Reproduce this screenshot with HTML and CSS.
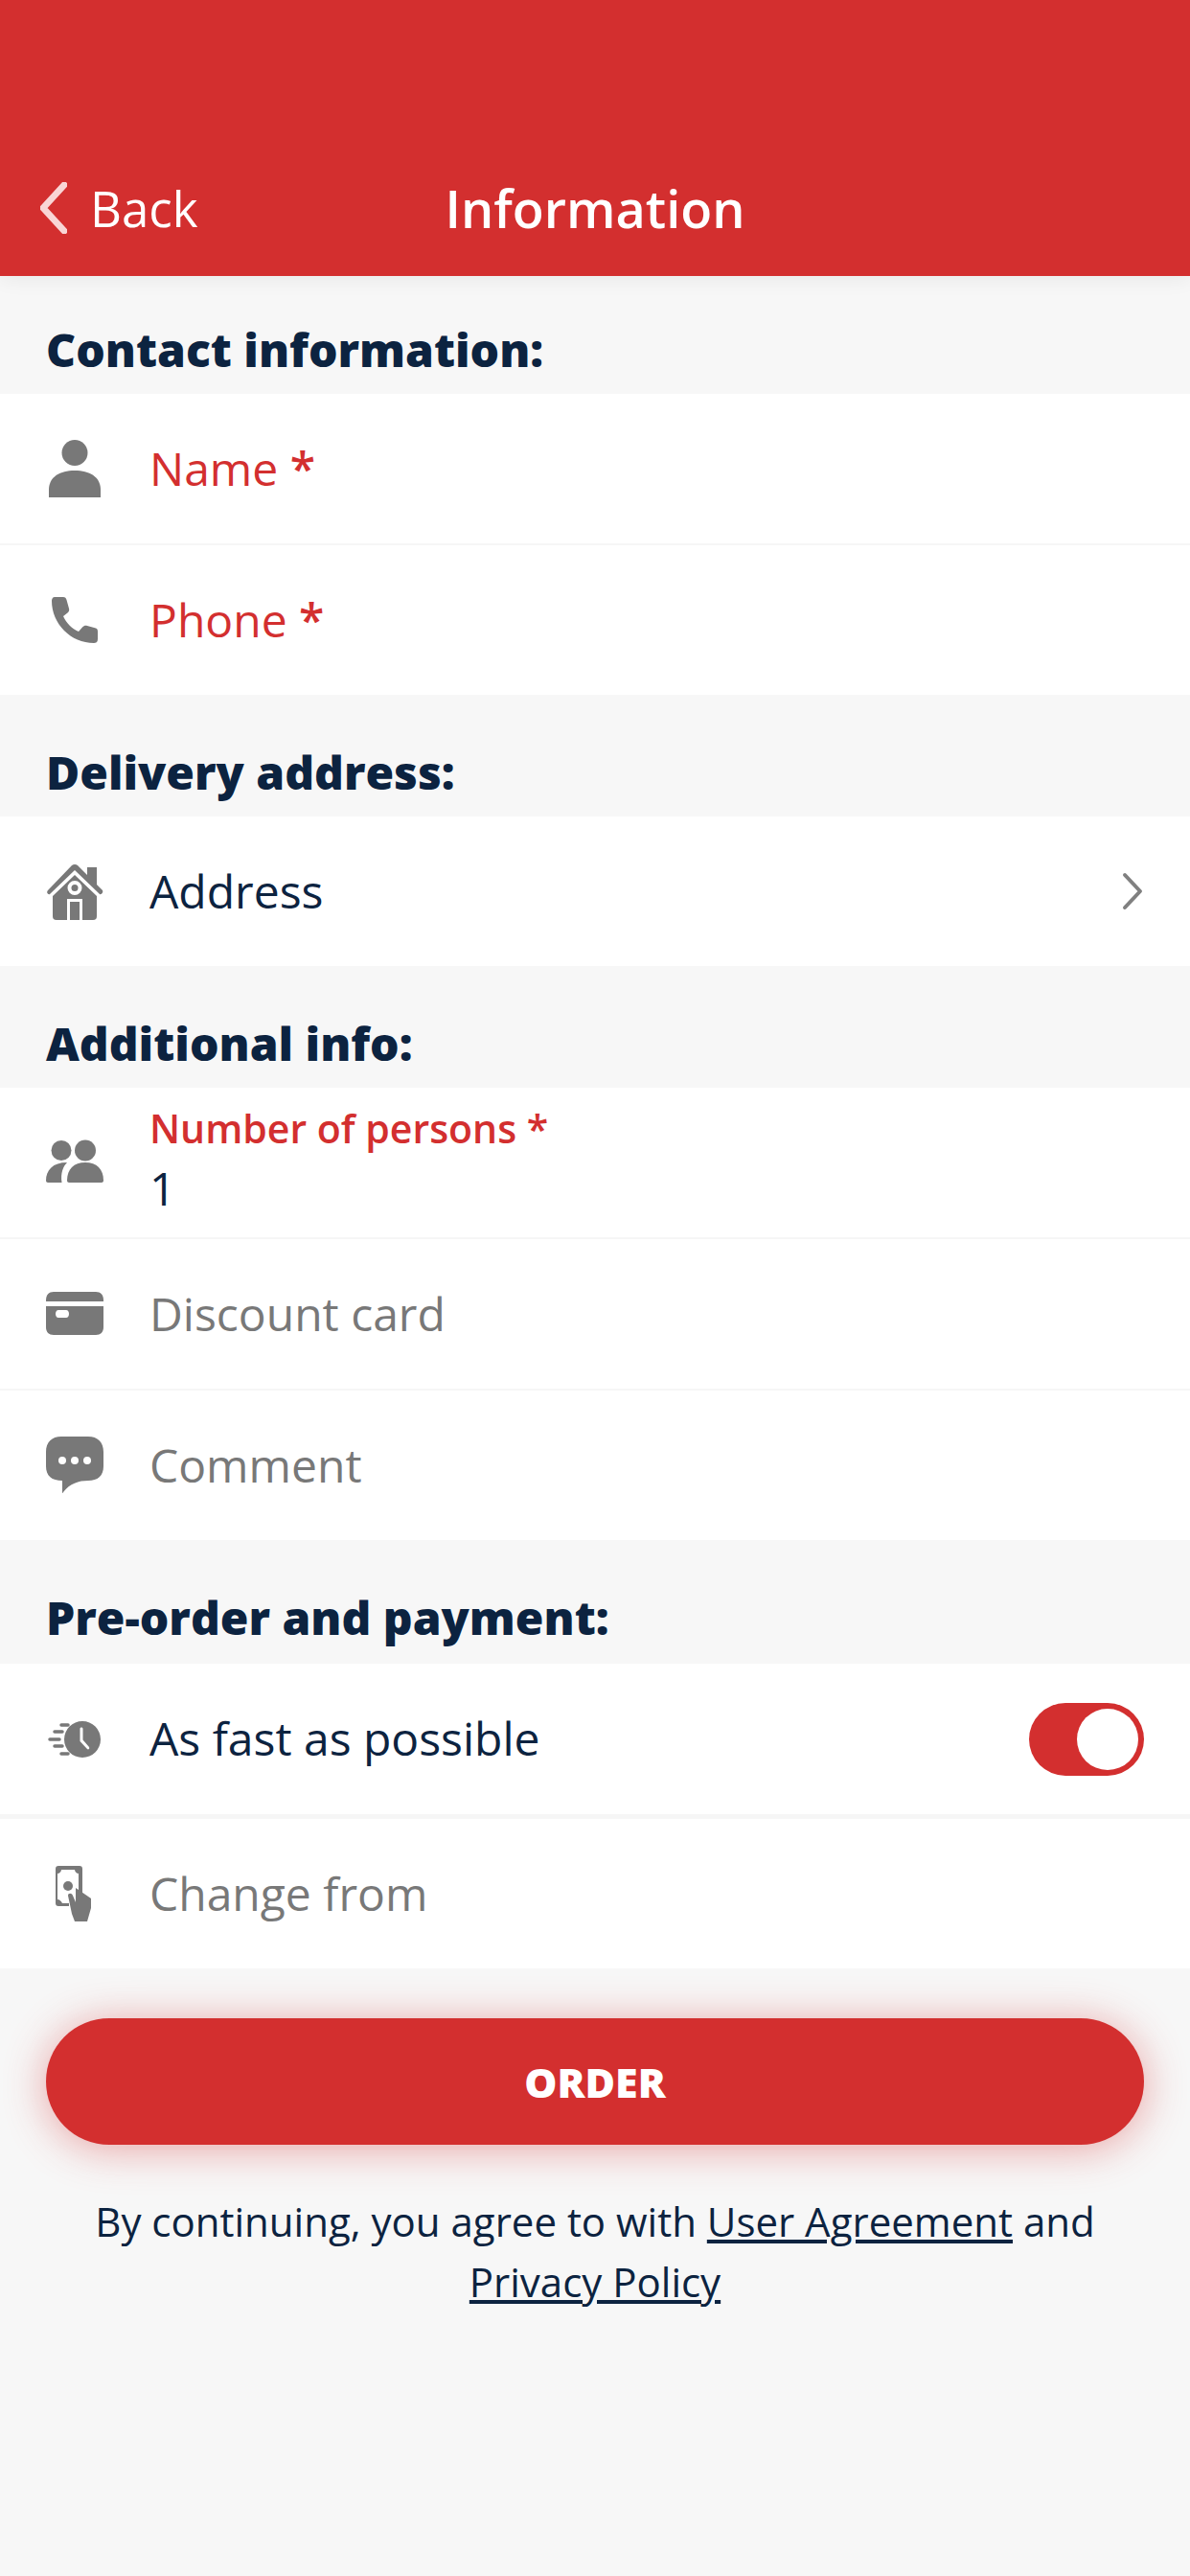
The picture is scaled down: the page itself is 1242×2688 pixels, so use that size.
FILE: index.html
```html
<!DOCTYPE html>
<html>

<head>
  <meta charset="UTF-8">
  <meta name="viewport" content="width=device-width, initial-scale=1.0">
  <title>Information</title>
  <link rel="stylesheet" href="styles.css">
</head>

<body>
  <div class="header">
    <div class="back">
      <svg class="back-icon" width="28" height="54" viewBox="0 0 28 54">
        <path d="M25 3 L3 27 L25 51" fill="none" stroke="#f9d5d5" stroke-width="7" stroke-linecap="round" stroke-linejoin="round" />
      </svg>
      <span>Back</span>
    </div>
    <div class="title">Information</div>
    <div></div>
  </div>

  <div class="section-title first">Contact information:</div>
  <div class="row">
    <svg class="icon" width="60" height="60" viewBox="0 0 60 60">
      <circle cx="30" cy="13.5" r="13.5" />
      <path d="M3 60 V52 C3 39 14 32 30 32 C46 32 57 39 57 52 V60 Z" />
    </svg>
    <div class="label required">Name <span class="star">*</span></div>
  </div>
  <div class="row last">
    <svg class="icon" width="60" height="60" viewBox="0 0 60 60">
      <path d="M9 6 H18 C20 6 21 7 21.500 9 L24 18 C24.500 20 24 21 22.500 22.500 L18 26 C21 33 27 39 34 42 L38 37.500 C39.500 36 41 35.500 43 36 L52 38.500 C53.500 39 54 40 54 42 V50 C54 53 52 54 50 54 C26 54 6 34 6 10 C6 8 7 6 9 6 Z" />
    </svg>
    <div class="label required">Phone <span class="star">*</span></div>
  </div>

  <div class="section-title">Delivery address:</div>
  <div class="row last">
    <svg class="icon" width="60" height="60" viewBox="0 0 60 60">
      <path d="M2 29 L27 3 C28.500 1.500 31.500 1.500 33 3 L43 13 V5 H53 V23 L59 29 C60 31 58 34 56 33 L30 8 L4 33 C2 34 0 31 2 29 Z" />
      <path fill-rule="evenodd" d="M7 35 L30 13 L53 35 V56 C53 58.500 52 60 49 60 H38 V38 H22 V60 H11 C8 60 7 58.500 7 56 Z M30 19 A7.500 7.500 0 1 0 30 34 A7.500 7.500 0 1 0 30 19 Z" />
      <circle cx="30" cy="26.500" r="3.500" />
      <rect x="25" y="41" width="10" height="19" />
    </svg>
    <div class="label">Address</div>
    <svg class="chevron" width="24" height="40" viewBox="0 0 24 40">
      <path d="M4 3 L20 20 L4 37" fill="none" stroke="#808080" stroke-width="4" stroke-linecap="round" stroke-linejoin="round" />
    </svg>
  </div>

  <div class="section-title">Additional info:</div>
  <div class="row">
    <svg class="icon" width="60" height="60" viewBox="0 0 60 60">
      <circle cx="16" cy="17.500" r="10.500" />
      <circle cx="41" cy="17.500" r="11" />
      <path d="M0 49 C0 38 7 30 22 30 C18 34 15 41 16.500 51 H2 C1 51 0 50 0 49 Z" />
      <path d="M22 49 C22 37 29 30 41 30 C53 30 60 37 60 49 C60 50 59 51 58 51 H24 C23 51 22 50 22 49 Z" />
    </svg>
    <div class="field">
      <div class="field-label">Number of persons *</div>
      <div class="field-value">1</div>
    </div>
  </div>
  <div class="row">
    <svg class="icon" width="60" height="60" viewBox="0 0 60 60">
      <path d="M0 16 C0 10 3 7 8 7 H52 C57 7 60 10 60 16 V17 H0 Z" />
      <path fill-rule="evenodd" d="M0 22 H60 V44 C60 49 57 52 52 52 H8 C3 52 0 49 0 44 Z M13 26 C9 26 9 34 13 34 H21 C25 34 25 26 21 26 Z" />
    </svg>
    <div class="label muted">Discount card</div>
  </div>
  <div class="row last">
    <svg class="icon" width="60" height="60" viewBox="0 0 60 60">
      <path fill-rule="evenodd" d="M16 0 H44 C54 0 60 6 60 16 V31 C60 41 54 46 44 46 C34 46 25 49 18 58 C17 60 17 59 17 58 V46 C6 46 0 41 0 31 V16 C0 6 6 0 16 0 Z M17 21 A4 4 0 1 0 17 29 A4 4 0 1 0 17 21 Z M30 21 A4 4 0 1 0 30 29 A4 4 0 1 0 30 21 Z M43 21 A4 4 0 1 0 43 29 A4 4 0 1 0 43 21 Z" />
    </svg>
    <div class="label muted">Comment</div>
  </div>

  <div class="section-title tall">Pre-order and payment:</div>
  <div class="row thick">
    <svg class="icon" width="60" height="60" viewBox="0 0 60 60">
      <path fill-rule="evenodd" d="M38 11 A19 19 0 1 0 38 49 A19 19 0 1 0 38 11 Z M35.500 19 C35.500 17 38.500 17 38.500 19 V30.500 L45 38 C46 40 44 41 43 40 L35.500 32 Z" />
      <g fill="none" stroke="#787878" stroke-width="3.500" stroke-linecap="round">
        <path d="M16 15 H23" />
        <path d="M9 22 H17" />
        <path d="M4 30 H14" />
        <path d="M9 37 H17" />
        <path d="M16 45 H23" />
      </g>
    </svg>
    <div class="label">As fast as possible</div>
    <div class="toggle">
      <div class="knob"></div>
    </div>
  </div>
  <div class="row last">
    <svg class="icon" width="60" height="60" viewBox="0 0 60 60">
      <path fill-rule="evenodd" d="M13 1 H35 C37 1 38 2 38 4 V41 H34 V9 C32 9 30 7 30 5 H16 C16 7 14 9 12 9 V36 C14 36 16 38 17 40 H24 V43 H13 C11 43 10 42 10 40 V4 C10 2 11 1 13 1 Z" />
      <circle cx="23" cy="22" r="5" />
      <path d="M23 32 C23 29 27 29 28 32 L31 39 V24 L47 35 V45 L43 59 H30 L27 51 Z" />
    </svg>
    <div class="label muted">Change from</div>
  </div>

  <div class="actions">
    <button class="order-button">ORDER</button>
    <p class="terms">By continuing, you agree to with <a href="#">User Agreement</a> and <a href="#">Privacy Policy</a></p>
  </div>
</body>

</html>
```

FILE: styles.css
```css
html {
  background-color: #f7f7f7;
}

body {
  margin: 0;
  min-height: 2688px;
  background-color: #f7f7f7;
  font-family: "Open Sans", "Noto Sans", sans-serif;
  color: #0c2340;
}

.header {
  display: grid;
  grid-template-columns: 1fr auto 1fr;
  align-items: center;
  height: 288px;
  box-sizing: border-box;
  padding: 180px 42px 43px;
  background-color: #d32f2f;
  color: white;
  box-shadow: 0 4px 20px rgba(0, 0, 0, 0.06);
  position: relative;
}

.back {
  display: flex;
  align-items: center;
  gap: 24px;
  font-size: 51px;
}

.back-icon {
  flex-shrink: 0;
}

.title {
  font-size: 54px;
  font-weight: 600;
}

.section-title {
  display: flex;
  align-items: flex-end;
  height: 127px;
  box-sizing: border-box;
  padding: 0 48px 14px;
  font-size: 48px;
  font-weight: 800;
}

.section-title.first {
  height: 123px;
}

.section-title.tall {
  height: 129px;
  padding-bottom: 16px;
}

.row {
  display: flex;
  align-items: center;
  height: 158px;
  box-sizing: border-box;
  padding: 0 48px;
  background-color: white;
  border-bottom: 2px solid #f6f6f6;
}

.row.last {
  height: 156px;
  border-bottom: none;
}

.row.thick {
  height: 162px;
  border-bottom-width: 5px;
}

.icon {
  flex-shrink: 0;
  margin-right: 48px;
  fill: #787878;
}

.label {
  flex: 1;
  padding-bottom: 2px;
  font-size: 48px;
}

.label.required {
  color: #d32f2f;
}

.label.muted {
  color: #787878;
}

.star {
  font-weight: 600;
}

.field {
  flex: 1;
}

.field-label {
  font-size: 41px;
  font-weight: 600;
  line-height: 56px;
  margin-top: -2px;
  color: #d32f2f;
}

.field-value {
  font-size: 48px;
  line-height: 70px;
}

.chevron {
  flex-shrink: 0;
}

.toggle {
  display: flex;
  justify-content: flex-end;
  align-items: center;
  width: 120px;
  height: 76px;
  box-sizing: border-box;
  padding-right: 6px;
  border-radius: 38px;
  background-color: #d32f2f;
}

.knob {
  width: 64px;
  height: 64px;
  border-radius: 50%;
  background-color: white;
}

.actions {
  padding: 52px 48px 0;
}

.order-button {
  display: block;
  width: 100%;
  height: 132px;
  border: none;
  border-radius: 66px;
  background-color: #d32f2f;
  color: white;
  font-family: inherit;
  font-size: 43px;
  font-weight: 800;
  box-shadow: 0 4px 44px rgba(211, 47, 47, 0.42);
}

.terms {
  margin: 48px 0 0;
  text-align: center;
  font-size: 42px;
  line-height: 63px;
}

.terms a {
  color: inherit;
  text-decoration: underline;
}
```
